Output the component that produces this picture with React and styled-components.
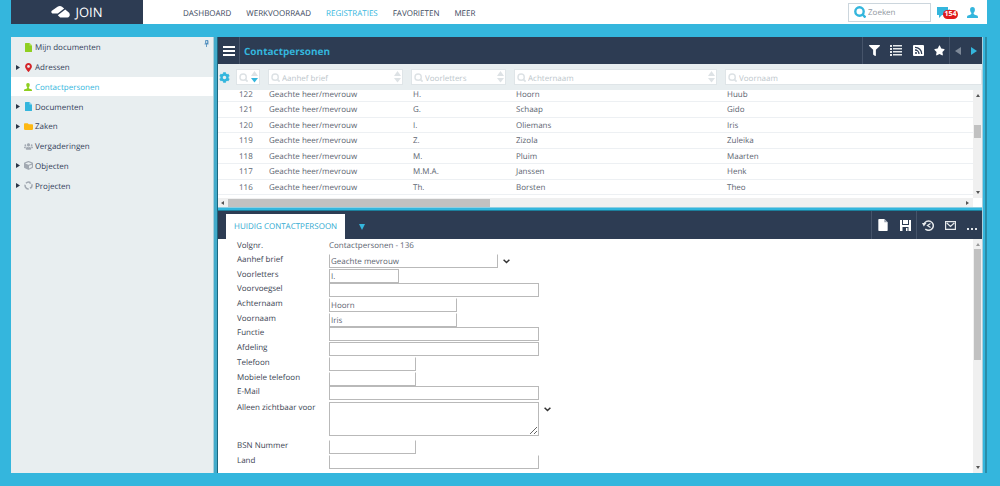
import React from 'react';
import styled, { createGlobalStyle, css } from 'styled-components';
import {
  FaCog,
  FaCube,
  FaFilter,
  FaFolder,
  FaMapMarkerAlt,
  FaStar,
  FaUsers,
} from 'react-icons/fa';

const blue = '#34b6dd';
const navy = '#2d3c53';
const pale = '#e8eef0';
const green = '#8fcf21';

const GlobalStyle = createGlobalStyle`
  * {
    box-sizing: border-box;
  }

  body {
    margin: 0;
    background: ${blue};
    color: #5c6470;
    font-family: 'Open Sans', sans-serif;
    font-size: 8px;
    line-height: 12px;
    text-rendering: geometricPrecision;
  }

  button, input, select, textarea {
    margin: 0;
    padding: 0;
    border: 0;
    background: none;
    color: inherit;
    font: inherit;
    text-rendering: inherit;
    outline: 0;
  }

  button {
    display: flex;
    align-items: center;
    justify-content: center;
  }

  svg {
    display: block;
    flex: none;
  }
`;

const Page = styled.div`
  display: flex;
  flex-direction: column;
  min-height: 100vh;
  padding: 0 13px 13px 11px;
`;

/* header */

const Header = styled.header`
  display: flex;
  align-items: center;
  height: 24px;
  margin-bottom: 13px;
  padding-right: 9px;
  background: #fff;
`;

const Logo = styled.div`
  display: flex;
  align-items: center;
  justify-content: center;
  gap: 5px;
  width: 132px;
  height: 24px;
  background: ${navy};
  color: #fff;
  font-size: 13px;
  line-height: 24px;
`;

const Nav = styled.nav`
  display: flex;
  gap: 15px;
  margin-right: auto;
  padding-left: 40px;
  padding-top: 4px;
`;

const NavLink = styled.a`
  color: ${({ $active }) => ($active ? blue : '#3b485c')};
  text-decoration: none;
`;

const SearchBox = styled.label`
  display: flex;
  align-items: center;
  gap: 2px;
  width: 83px;
  height: 19px;
  padding: 0 5px;
  border: 1px solid #ccd6dd;
  color: ${blue};

  input {
    flex: 1;
    min-width: 0;
    padding-top: 2px;
  }

  input::placeholder {
    color: #8f979e;
    opacity: 1;
  }
`;

const Messages = styled.button`
  position: relative;
  margin: 0 17px 0 6px;
`;

const Badge = styled.span`
  position: absolute;
  top: 3px;
  left: 6px;
  width: 15px;
  height: 9px;
  border-radius: 5px;
  background: #e01b1b;
  color: #fff;
  font-size: 7px;
  font-weight: 700;
  line-height: 10px;
`;

/* body */

const Body = styled.div`
  display: flex;
  flex: 1;
`;

const Sidebar = styled.aside`
  position: relative;
  width: 202px;
  background: ${pale};
`;

const Pin = styled.button`
  position: absolute;
  top: 3px;
  right: 4px;
`;

const Tree = styled.ul`
  display: grid;
  grid-auto-rows: 1fr;
  height: 158px;
  margin: 0;
  padding: 0;
  list-style: none;
`;

const TreeItem = styled.li`
  display: flex;
  align-items: center;
  padding-left: 5px;
  padding-top: 1px;
  background: ${({ $active }) => ($active ? '#fff' : 'transparent')};

  a {
    display: flex;
    align-items: center;
    color: ${({ $active }) => ($active ? blue : '#33415a')};
    line-height: 14px;
    text-decoration: none;
  }
`;

const TreeArrow = styled.span`
  width: 7px;
`;

const TreeIcon = styled.span`
  display: flex;
  justify-content: center;
  width: 10px;
  margin-right: 2px;
`;

const TreeText = styled.span`
  padding-top: 2px;
`;

const Splitter = styled.div`
  width: 5px;
  background: #43abca;
  border-left: 1px solid #a9cfdb;
  border-right: 1px solid #1c6780;
`;

const Main = styled.main`
  display: flex;
  flex: 1;
  flex-direction: column;
  min-width: 0;
  background: #fff;
`;

const Edge = styled.div`
  width: 5px;
  border-left: 1px solid #a9cfdb;
  border-right: 2px solid #2a8ca8;
  background: ${blue};
`;

const Toolbar = styled.div`
  display: flex;
  align-items: center;
  height: ${({ $tall }) => ($tall ? 28 : 27)}px;
  background: ${navy};
`;

const MenuButton = styled.button`
  width: 22px;
  height: 27px;
  border-right: 1px solid #46546a;
`;

const Title = styled.h1`
  margin: 0;
  padding-left: 4px;
  color: ${blue};
  font-size: 10px;
  font-weight: 700;
  line-height: 16px;
`;

const Tools = styled.div`
  display: flex;
  height: 100%;
  margin-left: ${({ $first }) => ($first ? 'auto' : 0)};
  border-left: 1px solid #46546a;
`;

const Tool = styled.button`
  width: ${({ $width }) => $width || 22}px;
  color: #fff;
`;

/* list */

const Filters = styled.div`
  display: grid;
  grid-template-columns: 18px 32px 143px 103px 211px 1fr;
  align-items: center;
  height: 26px;
  background: ${pale};
`;

const Settings = styled.button`
  width: 12px;
  color: ${blue};
`;

const Filter = styled.label`
  display: flex;
  align-items: center;
  height: 16px;
  margin-right: ${({ $last }) => ($last ? 0 : 8)}px;
  padding: 0 1px 0 2px;
  border: 1px solid #dfe5e8;
  background: #fff;
  color: #dde2e5;

  input {
    flex: 1;
    width: 0;
    min-width: 0;
    height: 14px;
    padding-left: 2px;
    padding-top: 3px;
  }

  input::placeholder {
    color: #bcc6cb;
    opacity: 1;
  }
`;

const ListView = styled.div`
  display: grid;
  grid-template-columns: 1fr 9px;
  grid-template-rows: 108px 9px;
`;

const Viewport = styled.div`
  overflow: hidden;
`;

const Table = styled.table`
  width: 100%;
  height: 108px;
  margin-top: -3px;
  border-collapse: collapse;
  table-layout: fixed;

  td {
    padding: 2px 0 0;
    border-bottom: 1px solid #edf0f3;
    line-height: 8px;
  }

  td:first-child {
    padding-left: 21px;
  }
`;

const bar = css`
  display: flex;
  align-items: center;
  justify-content: space-between;
  background: #f0f0f0;
  color: #555;
`;

const VerticalBar = styled.div`
  ${bar}
  flex-direction: column;
  width: 9px;
  padding: 4px 1px;
`;

const HorizontalBar = styled.div`
  ${bar}
  padding: 1px 4px 0 3px;
`;

const Thumb = styled.div`
  background: #c1c1c1;
  ${({ $vertical, $size, $before }) =>
    $vertical
      ? css`
          width: 7px;
          height: ${$size}px;
          margin-top: ${$before}px;
          margin-bottom: auto;
        `
      : css`
          width: ${$size};
          height: 8px;
          margin-left: ${$before}px;
          margin-right: auto;
        `}
`;

const Divider = styled.div`
  height: 4px;
  border-top: 1px solid #8fcfe2;
  border-bottom: 1px solid #1c7f9c;
  background: ${blue};
`;

/* detail */

const Tab = styled.button`
  align-self: flex-end;
  height: 25px;
  margin-left: 8px;
  padding: 0 8px;
  background: #fff;
  color: #2fa9d0;
`;

const TabMenu = styled.button`
  margin: 4px 0 0 14px;
`;

const Detail = styled.div`
  display: flex;
  flex: 1;
  justify-content: space-between;
`;

const Form = styled.form`
  padding-left: 19px;
`;

const Fields = styled.div`
  display: grid;
  grid-auto-rows: 1fr;
  height: 148px;
  padding-top: 1px;
`;

const Row = styled.div`
  display: flex;
  align-items: flex-start;
  height: ${({ $height }) => ($height ? `${$height}px` : 'auto')};

  > label,
  > b {
    width: 92px;
    color: #3b4452;
    font-weight: 400;
  }
`;

const ValueRow = styled(Row)`
  padding-top: 1px;
`;

const field = css`
  width: ${({ $width }) => $width}px;
  height: 14px;
  padding: 1px 1px 0;
  border: 1px solid #b9b9b9;
  border-top-color: ${({ $open }) => ($open ? 'transparent' : '#b9b9b9')};
  background: #fff;
  line-height: 11px;
`;

const Input = styled.input`
  ${field}
`;

const Select = styled.select`
  ${field}
  appearance: none;
`;

const TextArea = styled.textarea`
  ${field}
  height: 34px;
  resize: vertical;
`;

const DropButton = styled.button`
  margin: 5px 0 0 5px;
  color: #333;
`;

/* drawings */

const Triangle = ({ dir, color = 'currentColor', w = 4, h = 5 }) => {
  const points = {
    right: '0,0 10,5 0,10',
    left: '10,0 0,5 10,10',
    up: '0,10 5,0 10,10',
    down: '0,0 10,0 5,10',
  };
  return (
    <svg width={w} height={h} viewBox="0 0 10 10" preserveAspectRatio="none">
      <polygon points={points[dir]} fill={color} />
    </svg>
  );
};

const LogoMark = () => (
  <svg width="19" height="12" viewBox="0 0 19 12" fill="#fff">
    <path d="M6.500.8C8-.2 9.800-.2 11 .8L13.200 2.600 6.800 7.600H2.200C.4 7.400-.2 5.800.8 4.800z" />
    <path d="M14.200 3.400 17.800 6.500c1.700 1.600 1.100 4.500-1.300 5H9.200L6.800 9.300z" />
  </svg>
);

const PersonIcon = ({ color, size }) => (
  <svg width={size} height={size} viewBox="0 0 12 12" fill={color}>
    <path d="M6 0C4.200 0 3.200 1.400 3.400 3.200c.1 1.400.7 2.500 1.400 3.200 0 1-.2 1.700-1.200 2.100L1 9.400C.2 9.800 0 10.500 0 12h12c0-1.500-.2-2.200-1-2.600L8.400 8.500c-1-.4-1.200-1.100-1.200-2.100.7-.7 1.300-1.800 1.400-3.200C8.800 1.400 7.800 0 6 0z" />
  </svg>
);

const FileIcon = ({ color, fold, w = 7, h = 9 }) => (
  <svg width={w} height={h} viewBox="0 0 14 18">
    <path d="M1 0h8l5 5v12a1 1 0 0 1-1 1H1a1 1 0 0 1-1-1V1a1 1 0 0 1 1-1z" fill={color} />
    <path d="M9 0v5h5z" fill={fold} />
  </svg>
);

const ProjectIcon = () => (
  <svg width="9" height="9" viewBox="0 0 18 18" fill="none" stroke="#a2a9b2" strokeWidth="3">
    <path d="M4 4.500A7 7 0 0 1 12.500 3M15.500 6.500A7 7 0 0 1 13 14.500M9.500 16A7 7 0 0 1 2.300 7.500" />
    <path d="M11 1v5l4-1zM15 11l-4 2 3 3z" fill="#a2a9b2" stroke="none" />
  </svg>
);

const PinIcon = () => (
  <svg width="5" height="7" viewBox="0 0 10 14" fill="none" stroke="#3f83b8" strokeWidth="1.500">
    <path d="M3 1h5v6H3zM1 8h8M5 8v6" />
    <path d="M6.500 1v6" />
  </svg>
);

const ChatIcon = () => (
  <svg width="13" height="11" viewBox="0 0 13 11" fill={blue}>
    <path d="M0 0h11v8H5l-3 3V8H0z" />
    <path d="M11.500 2H13v7h-1.500z" opacity="0.5" />
  </svg>
);

const HamburgerIcon = () => (
  <svg width="12" height="10" viewBox="0 0 12 10" fill="#fff">
    <path d="M0 0h12v2H0zM0 4h12v2H0zM0 8h12v2H0z" />
  </svg>
);

const ListIcon = () => (
  <svg width="12" height="11" viewBox="0 0 12 11" fill="#e6e9ec">
    <path d="M0 0h2v2H0zM3 0h9v1.500H3zM0 3h2v2H0zM3 3h9v1.500H3zM0 6h2v2H0zM3 6h9v1.500H3zM0 9h2v2H0zM3 9h9v1.500H3z" />
  </svg>
);

const RssIcon = () => (
  <svg width="11" height="11" viewBox="0 0 11 11">
    <rect width="11" height="11" rx="1" fill="#fff" />
    <g fill="none" stroke={navy} strokeWidth="1.300">
      <path d="M2 2.300A6.500 6.500 0 0 1 8.700 9M2 5A4 4 0 0 1 6 9" />
    </g>
    <circle cx="3" cy="8" r="1" fill={navy} />
  </svg>
);

const SaveIcon = () => (
  <svg width="11" height="11" viewBox="0 0 11 11">
    <path d="M0 0h11v11H0z" fill="#fff" />
    <path d="M2 0h7v5H2zM2.500 7h6v4h-6z" fill={navy} />
    <path d="M3 0h5v4H3zM6 8h1.500v3H6z" fill="#fff" />
  </svg>
);

const HistoryIcon = () => (
  <svg width="12" height="11" viewBox="0 0 12 11" fill="none" stroke="#e6e9ec">
    <path d="M2 4.500A4.700 4.700 0 1 1 3.300 9" strokeWidth="1.500" />
    <path d="M0 3h4.500L1.800 6.500z" fill="#e6e9ec" stroke="none" />
    <path d="M8.500 3.500 5.500 5.500l3 2" strokeWidth="1.300" />
  </svg>
);

const MailIcon = () => (
  <svg width="11" height="9" viewBox="0 0 11 9" fill="none" stroke="#e6e9ec" strokeWidth="1.200">
    <path d="M.6.6h9.800v7.800H.6zM1.800 2l3.700 3.400L9.200 2" />
  </svg>
);

const DotsIcon = () => (
  <svg width="10" height="10" viewBox="0 0 10 10" fill="#dfe3e8">
    <path d="M0 8h2v2H0zM4 8h2v2H4zM8 8h2v2H8z" />
  </svg>
);

const Chevron = () => (
  <svg width="7" height="5" viewBox="0 0 7 5" fill="none" stroke="currentColor" strokeWidth="1.500">
    <path d="m.6.7 2.900 2.800L6.400.7" />
  </svg>
);

const SearchIcon = ({ size = 9, bold }) => (
  <svg width={size} height={size} viewBox="0 0 12 12" fill="none" stroke="currentColor">
    <circle cx="5.500" cy="5.500" r="4.200" strokeWidth={bold ? 2.4 : 1.9} />
    <path d="m8.500 8.500 3 3" strokeWidth="2.400" />
  </svg>
);

const SortIcon = ({ down = 'currentColor' }) => (
  <svg width="7" height="12" viewBox="0 0 7 12" fill="currentColor">
    <path d="M0 5 3.500 0 7 5z" />
    <path d="M0 7h7l-3.500 4.500z" fill={down} />
  </svg>
);

const nav = ['DASHBOARD', 'WERKVOORRAAD', 'REGISTRATIES', 'FAVORIETEN', 'MEER'];

const tree = [
  { name: 'Mijn documenten', icon: <FileIcon color={green} fold="#b9e36b" /> },
  { name: 'Adressen', icon: <FaMapMarkerAlt size={9} color="#d4252a" />, children: true },
  { name: 'Contactpersonen', icon: <PersonIcon size={8} color={green} />, active: true },
  { name: 'Documenten', icon: <FileIcon color={blue} fold="#9adcf0" />, children: true },
  { name: 'Zaken', icon: <FaFolder size={9} color="#fdb813" />, children: true },
  { name: 'Vergaderingen', icon: <FaUsers size={9} color="#a2a9b2" /> },
  { name: 'Objecten', icon: <FaCube size={9} color="#a2a9b2" />, children: true },
  { name: 'Projecten', icon: <ProjectIcon />, children: true },
];

const filters = ['', 'Aanhef brief', 'Voorletters', 'Achternaam', 'Voornaam'];

const contacts = [
  [122, 'H.', 'Hoorn', 'Huub'],
  [121, 'G.', 'Schaap', 'Gido'],
  [120, 'I.', 'Oliemans', 'Iris'],
  [119, 'Z.', 'Zizola', 'Zuleika'],
  [118, 'M.', 'Pluim', 'Maarten'],
  [117, 'M.M.A.', 'Janssen', 'Henk'],
  [116, 'Th.', 'Borsten', 'Theo'],
];

const fields = [
  { id: 'voorletters', label: 'Voorletters', value: 'I.', width: 70 },
  { id: 'voorvoegsel', label: 'Voorvoegsel', width: 210 },
  { id: 'achternaam', label: 'Achternaam', value: 'Hoorn', width: 128, open: true },
  { id: 'voornaam', label: 'Voornaam', value: 'Iris', width: 128, open: true },
  { id: 'functie', label: 'Functie', width: 210 },
  { id: 'afdeling', label: 'Afdeling', width: 210 },
  { id: 'telefoon', label: 'Telefoon', width: 87, open: true },
  { id: 'mobiel', label: 'Mobiele telefoon', width: 87, open: true },
  { id: 'email', label: 'E-Mail', width: 210 },
];

const TopBar = () => (
  <Header>
    <Logo>
      <LogoMark />
      JOIN
    </Logo>
    <Nav>
      {nav.map((item) => (
        <NavLink key={item} href="#" $active={item === 'REGISTRATIES'}>
          {item}
        </NavLink>
      ))}
    </Nav>
    <SearchBox>
      <SearchIcon size={12} bold />
      <input type="text" placeholder="Zoeken" aria-label="Zoeken" />
    </SearchBox>
    <Messages aria-label="Berichten">
      <ChatIcon />
      <Badge>154</Badge>
    </Messages>
    <button aria-label="Profiel">
      <PersonIcon size={11} color={blue} />
    </button>
  </Header>
);

const Navigation = () => (
  <Sidebar>
    <Tree>
      {tree.map(({ name, icon, active, children }) => (
        <TreeItem key={name} $active={active}>
          <TreeArrow>{children && <Triangle dir="right" color="#2b3648" />}</TreeArrow>
          <a href="#">
            <TreeIcon>{icon}</TreeIcon>
            <TreeText>{name}</TreeText>
          </a>
        </TreeItem>
      ))}
    </Tree>
    <Pin aria-label="Vastzetten">
      <PinIcon />
    </Pin>
  </Sidebar>
);

const ContactList = () => (
  <section>
    <Toolbar>
      <MenuButton aria-label="Menu">
        <HamburgerIcon />
      </MenuButton>
      <Title>Contactpersonen</Title>
      <Tools $first>
        <Tool aria-label="Filter"><FaFilter size={11} /></Tool>
        <Tool aria-label="Lijst"><ListIcon /></Tool>
        <Tool aria-label="RSS"><RssIcon /></Tool>
        <Tool $width={20} aria-label="Favoriet"><FaStar size={11} /></Tool>
      </Tools>
      <Tools>
        <Tool $width={16} aria-label="Vorige">
          <Triangle dir="left" color="#7d8897" w={6} h={8} />
        </Tool>
        <Tool $width={16} aria-label="Volgende">
          <Triangle dir="right" color={blue} w={6} h={8} />
        </Tool>
      </Tools>
    </Toolbar>
    <Filters>
      <Settings aria-label="Instellingen"><FaCog size={11} /></Settings>
      {filters.map((name, i) => {
        const last = i === filters.length - 1;
        return (
          <Filter key={name} $last={last}>
            <SearchIcon />
            <input type="text" placeholder={name} aria-label={name || 'Volgnr.'} />
            {!last && <SortIcon down={i === 0 ? blue : undefined} />}
          </Filter>
        );
      })}
    </Filters>
    <ListView>
      <Viewport>
        <Table>
          <colgroup>
            <col width="51" />
            <col width="144" />
            <col width="103" />
            <col width="211" />
            <col />
          </colgroup>
          <tbody>
            {contacts.map(([id, initials, surname, name]) => (
              <tr key={id}>
                <td>{id}</td>
                <td>Geachte heer/mevrouw</td>
                <td>{initials}</td>
                <td>{surname}</td>
                <td>{name}</td>
              </tr>
            ))}
          </tbody>
        </Table>
      </Viewport>
      <VerticalBar>
        <Triangle dir="up" w={4} h={3} />
        <Thumb $vertical $size={13} $before={28} />
        <Triangle dir="down" w={4} h={3} />
      </VerticalBar>
      <HorizontalBar>
        <Triangle dir="left" w={3} h={4} />
        <Thumb $size="35%" $before={4} />
        <Triangle dir="right" w={3} h={4} />
      </HorizontalBar>
    </ListView>
  </section>
);

const ContactDetail = () => (
  <>
    <Toolbar $tall>
      <Tab>HUIDIG CONTACTPERSOON</Tab>
      <TabMenu aria-label="Meer tabbladen">
        <Triangle dir="down" color={blue} w={6} h={6} />
      </TabMenu>
      <Tools $first>
        <Tool aria-label="Nieuw"><FileIcon color="#fff" fold="#9aa3b0" w={10} h={12} /></Tool>
        <Tool aria-label="Opslaan"><SaveIcon /></Tool>
      </Tools>
      <Tools>
        <Tool aria-label="Historie"><HistoryIcon /></Tool>
        <Tool aria-label="E-mail"><MailIcon /></Tool>
        <Tool $width={21} aria-label="Meer"><DotsIcon /></Tool>
      </Tools>
    </Toolbar>
    <Detail>
      <Form>
        <ValueRow $height={14}>
          <b>Volgnr.</b>
          <output>Contactpersonen - 136</output>
        </ValueRow>
        <Fields>
          <Row>
            <label htmlFor="aanhef">Aanhef brief</label>
            <Select id="aanhef" $width={169} $open>
              <option>Geachte mevrouw</option>
            </Select>
            <DropButton as="span">
              <Chevron />
            </DropButton>
          </Row>
          {fields.map(({ id, label, value = '', width, open }) => (
            <Row key={id}>
              <label htmlFor={id}>{label}</label>
              <Input id={id} type="text" defaultValue={value} $width={width} $open={open} />
            </Row>
          ))}
        </Fields>
        <ValueRow $height={39}>
          <label htmlFor="zichtbaar">Alleen zichtbaar voor</label>
          <TextArea id="zichtbaar" $width={210} />
          <DropButton type="button" aria-label="Kiezen">
            <Chevron />
          </DropButton>
        </ValueRow>
        <Row $height={15}>
          <label htmlFor="bsn">BSN Nummer</label>
          <Input id="bsn" type="text" $width={87} $open />
        </Row>
        <Row $height={15}>
          <label htmlFor="land">Land</label>
          <Input id="land" type="text" $width={210} $open />
        </Row>
      </Form>
      <VerticalBar>
        <Triangle dir="up" w={4} h={3} color="#999" />
        <Thumb $vertical $size={111} $before={3} />
        <Triangle dir="down" w={4} h={3} />
      </VerticalBar>
    </Detail>
  </>
);

const App = () => (
  <>
    <GlobalStyle />
    <Page>
      <TopBar />
      <Body>
        <Navigation />
        <Splitter />
        <Main>
          <ContactList />
          <Divider />
          <ContactDetail />
        </Main>
        <Edge />
      </Body>
    </Page>
  </>
);

export default App;
